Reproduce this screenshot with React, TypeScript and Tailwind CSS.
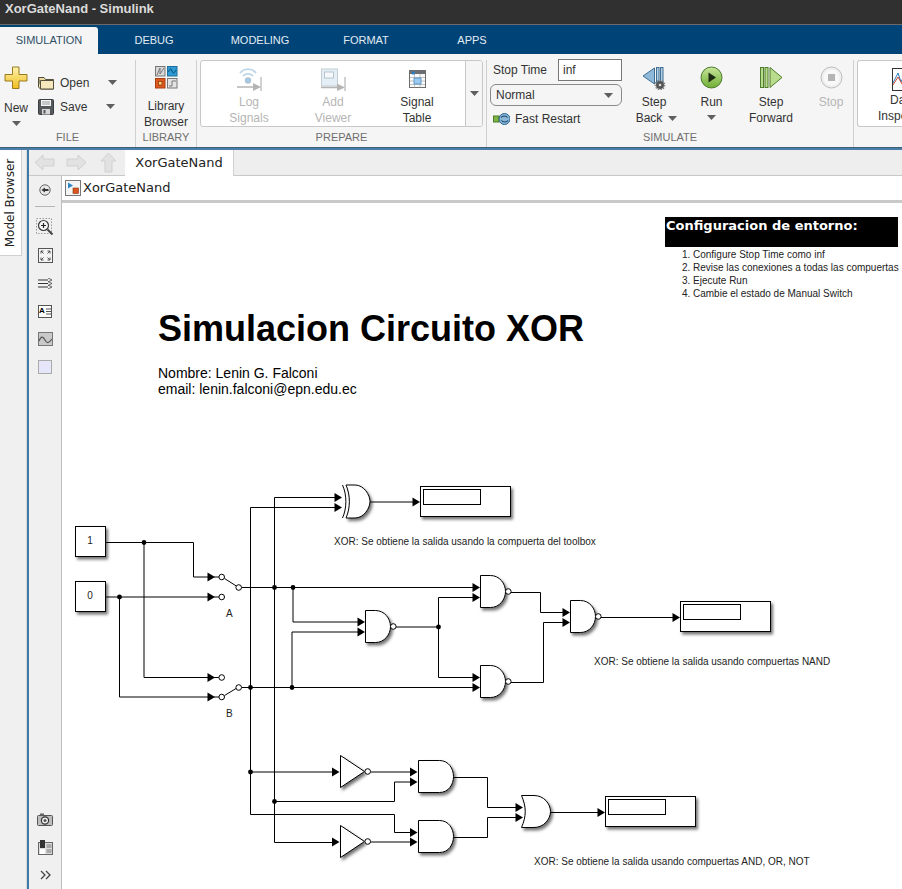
import type { ReactNode } from 'react';

const sans = "font-['Liberation_Sans',Arial,sans-serif]";
const deja = "font-['DejaVu_Sans',sans-serif]";

function Caret({ className = '' }: { className?: string }) {
  return (
    <svg width="9" height="5" viewBox="0 0 9 5" className={className}>
      <path d="M0 0H9L4.5 5Z" fill="#5f5f5f" />
    </svg>
  );
}

function PlusIcon() {
  return (
    <svg width="24" height="24" viewBox="0 0 24 24">
      <defs>
        <linearGradient id="plusFill" x1="0" y1="0" x2="0" y2="1">
          <stop offset="0" stopColor="#fff4b0" />
          <stop offset="1" stopColor="#f0bc1c" />
        </linearGradient>
      </defs>
      <path d="M8.5 1H15V8.5H23V15H15V22.5H8.5V15H1V8.5H8.5Z" fill="url(#plusFill)" stroke="#9a7a1e" strokeLinejoin="round" />
    </svg>
  );
}

function FolderIcon() {
  return (
    <svg width="17" height="15" viewBox="0 0 17 15">
      <path d="M0.5 2.5H6L7.5 4.5H15.5V14H2.5Z" fill="#e9d9a0" stroke="#55503c" />
      <path d="M0.5 2.5V12L2.5 14L2.5 5.5H15.5V14H2.5" fill="#f4e8bc" stroke="#55503c" />
    </svg>
  );
}

function SaveIcon() {
  return (
    <svg width="16" height="16" viewBox="0 0 16 16">
      <rect x="0.5" y="0.5" width="15" height="15" rx="1" fill="#55595c" stroke="#3c3f42" />
      <rect x="3" y="1" width="10" height="6" fill="#f4f4f4" />
      <path d="M4 3H12M4 5H12" stroke="#9a9a9a" />
      <rect x="4" y="10" width="8" height="5.5" fill="#d6d6d6" />
      <rect x="5.5" y="11" width="2" height="3.5" fill="#55595c" />
    </svg>
  );
}

function LibraryIcon() {
  return (
    <svg width="23" height="23" viewBox="0 0 23 23">
      <rect x="0.5" y="0.5" width="9.5" height="9.5" fill="#d8d8d8" stroke="#777" />
      <path d="M2 9L5 2V8L9 2" fill="none" stroke="#777" />
      <rect x="12.5" y="0.5" width="9.5" height="9.5" fill="#2e9bd6" stroke="#1d6f9c" />
      <path d="M13.5 6C15 2 16 2 17 5S19 8 21 4" fill="none" stroke="#0b4a70" />
      <rect x="0.5" y="12.5" width="9.5" height="9.5" fill="#dc5a1e" stroke="#a83d0e" />
      <rect x="3.5" y="15.5" width="3.5" height="3.5" fill="#f7d27c" stroke="#8a2f08" strokeWidth="0.7" />
      <rect x="12.5" y="12.5" width="9.5" height="9.5" fill="#e4e4e4" stroke="#777" />
      <path d="M14 20H17V15H21" fill="none" stroke="#777" />
    </svg>
  );
}

function LogSignalsIcon() {
  return (
    <svg width="25" height="23" viewBox="0 0 25 23">
      <path d="M3 5C7 0 15 0 19 5M6 8C9 5 13 5 16 8" fill="none" stroke="#b9d3e6" strokeWidth="1.6" />
      <circle cx="11" cy="12.5" r="3.2" fill="#a9c6dc" />
      <path d="M0 19H16" stroke="#b4b4b4" strokeWidth="1.4" />
      <path d="M16 15L24 19L16 23Z" fill="#b4b4b4" />
      <path d="M24 9V23" stroke="#b4b4b4" strokeWidth="1.2" />
    </svg>
  );
}

function AddViewerIcon() {
  return (
    <svg width="25" height="23" viewBox="0 0 25 23">
      <rect x="0.5" y="1" width="16" height="17" fill="#e4eef6" stroke="#c4cdd4" />
      <rect x="3.5" y="4" width="9" height="6" fill="#f6f9fb" stroke="#b9c4cc" />
      <path d="M0 19.5H16" stroke="#b4b4b4" strokeWidth="1.4" />
      <path d="M16 15.5L24 19.5L16 23Z" fill="#b4b4b4" />
      <path d="M24 9V23" stroke="#b4b4b4" strokeWidth="1.2" />
    </svg>
  );
}

function SignalTableIcon() {
  return (
    <svg width="17" height="18" viewBox="0 0 17 18">
      <rect x="0.5" y="0.5" width="16" height="17" fill="#fafafa" stroke="#6d6d6d" />
      <rect x="1" y="1" width="15" height="3" fill="#6b6f73" />
      <rect x="3" y="1.5" width="3" height="3" fill="#2d7fc4" />
      <path d="M1 7.5H16M1 11H16M1 14.5H16M5.5 4V17.5M11 4V17.5" stroke="#b4b4b4" strokeWidth="0.8" />
      <rect x="5" y="8" width="7" height="6" fill="#9cc9ee" stroke="#4a90cc" strokeWidth="0.8" />
    </svg>
  );
}

function FastRestartIcon() {
  return (
    <svg width="17" height="14" viewBox="0 0 17 14">
      <rect x="0.5" y="4" width="5.5" height="6" fill="#7cb342" stroke="#4e7d26" />
      <path d="M6 7H8" stroke="#444" />
      <circle cx="11.5" cy="7" r="5.5" fill="#8ab7d8" stroke="#27628c" />
      <path d="M8 5.5C9.5 3.5 13 3.5 14.5 5.5M15 8.5C13.5 10.5 10 10.5 8.5 8.5" fill="none" stroke="#123f5e" strokeWidth="1.2" />
    </svg>
  );
}

function StepBackIcon() {
  return (
    <svg width="24" height="24" viewBox="0 0 24 24">
      <path d="M12.5 2V18L1 10Z" fill="#8fb9d8" stroke="#3f6f94" strokeLinejoin="round" />
      <rect x="14.5" y="1.5" width="2.5" height="15" fill="#b3cfe3" stroke="#3f6f94" />
      <rect x="18.5" y="1.5" width="2.5" height="15" fill="#b3cfe3" stroke="#3f6f94" />
      <circle cx="18" cy="19" r="4" fill="#555" />
      <circle cx="18" cy="19" r="4.8" fill="none" stroke="#777" strokeWidth="1.2" strokeDasharray="1.5 1.2" />
      <circle cx="18" cy="19" r="1.3" fill="#ddd" />
    </svg>
  );
}

function RunIcon() {
  return (
    <svg width="23" height="23" viewBox="0 0 23 23">
      <defs>
        <linearGradient id="runFill" x1="0" y1="0" x2="0" y2="1">
          <stop offset="0" stopColor="#c8e59a" />
          <stop offset="1" stopColor="#6fae35" />
        </linearGradient>
      </defs>
      <circle cx="11.5" cy="11.5" r="10.5" fill="url(#runFill)" stroke="#4a7a2a" />
      <path d="M8.5 6.5L16 11.5L8.5 16.5Z" fill="#1d2a12" />
    </svg>
  );
}

function StepForwardIcon() {
  return (
    <svg width="23" height="23" viewBox="0 0 23 23">
      <rect x="0.5" y="1.5" width="3" height="20" fill="#b9dc8c" stroke="#4f7d2b" />
      <rect x="5" y="1.5" width="3" height="20" fill="#b9dc8c" stroke="#4f7d2b" />
      <path d="M10 1.5V21.5L22 11.5Z" fill="#b9dc8c" stroke="#4f7d2b" strokeLinejoin="round" />
    </svg>
  );
}

function StopIcon() {
  return (
    <svg width="23" height="23" viewBox="0 0 23 23">
      <circle cx="11.5" cy="11.5" r="10.5" fill="#efefef" stroke="#bdbdbd" />
      <circle cx="11.5" cy="11.5" r="8" fill="#f8f8f8" />
      <rect x="8" y="8" width="7" height="7" fill="#b4b4b4" />
    </svg>
  );
}

function InspectorIcon() {
  return (
    <svg width="17" height="23" viewBox="0 0 17 23">
      <rect x="0.5" y="0.5" width="16" height="22" fill="#fff" stroke="#333" />
      <path d="M1 15L6 5L9 14L14 3" fill="none" stroke="#2c7fbf" />
      <path d="M1 17L6 9L10 16L16 10" fill="none" stroke="#c9452b" />
    </svg>
  );
}

function NavArrow({ dir }: { dir: 'left' | 'right' | 'up' }) {
  const rotate = dir === 'left' ? '' : dir === 'right' ? 'rotate-180' : 'rotate-90';
  return (
    <svg width="21" height="17" viewBox="0 0 21 17" className={rotate}>
      <path d="M1 8.5L9 1V5H20V12H9V16Z" fill="#e2e2e2" stroke="#d0d0d0" strokeLinejoin="round" />
    </svg>
  );
}

function ModelIcon() {
  return (
    <svg width="16" height="16" viewBox="0 0 16 16">
      <rect x="0.5" y="0.5" width="15" height="15" fill="#f4f4f4" stroke="#777" />
      <path d="M3 2.5L8 5.5L3 8.5Z" fill="#2b86c5" />
      <rect x="8" y="8" width="5.5" height="5.5" fill="#d9541e" stroke="#8c3310" strokeWidth="0.6" />
    </svg>
  );
}

function ToolIcon({ children }: { children: ReactNode }) {
  return <div className="h-[28px] flex items-center justify-center">{children}</div>;
}

function SideToolbar() {
  return (
    <div className="w-[33px] shrink-0 bg-[#f0f0f0] border-r border-[#bdbdbd] h-full flex flex-col items-stretch">
      <div className="h-[28px] mt-0 flex items-center justify-center">
        <svg width="12" height="12" viewBox="0 0 12 12">
          <circle cx="6" cy="6" r="5.2" fill="#e8e8e8" stroke="#666" />
          <path d="M2.5 6L6 3.5V5H9.5V7H6V8.5Z" fill="#333" />
        </svg>
      </div>
      <div className="mx-[6px] mt-[2px] mb-[6px] h-px bg-[#b5b5b5]" />
      <ToolIcon>
        <svg width="18" height="18" viewBox="0 0 18 18">
          <rect x="0.5" y="0.5" width="15" height="15" fill="none" stroke="#999" strokeDasharray="1.5 1.5" />
          <circle cx="7.5" cy="7.5" r="5" fill="#f7f7f7" stroke="#3a3a3a" strokeWidth="1.2" />
          <path d="M5 7.5H10M7.5 5V10" stroke="#222" strokeWidth="1.2" />
          <path d="M11.5 11.5L16.5 16.5" stroke="#444" strokeWidth="2" />
        </svg>
      </ToolIcon>
      <ToolIcon>
        <svg width="15" height="15" viewBox="0 0 15 15">
          <rect x="0.5" y="0.5" width="14" height="14" fill="#f4f4f4" stroke="#555" />
          <path d="M3 5.5V3H5.5M9.5 3H12V5.5M12 9.5V12H9.5M5.5 12H3V9.5M3 3L5.5 5.5M12 3L9.5 5.5M12 12L9.5 9.5M3 12L5.5 9.5" fill="none" stroke="#444" strokeWidth="0.9" />
        </svg>
      </ToolIcon>
      <ToolIcon>
        <svg width="15" height="11" viewBox="0 0 15 11">
          <path d="M0 2H11M0 5.5H11M0 9H11" stroke="#333" />
          <path d="M10 0L14 2L10 4M10 3.5L14 5.5L10 7.5M10 7L14 9L10 11" fill="#eee" stroke="#444" strokeWidth="0.8" />
        </svg>
      </ToolIcon>
      <ToolIcon>
        <div className={`w-[14px] h-[13px] border border-[#555] bg-white flex items-center justify-center gap-px text-[8px] font-bold leading-none text-black ${sans}`}>
          <span>A</span>
          <svg width="5" height="7" viewBox="0 0 5 7">
            <path d="M0 1H5M0 3.5H5M0 6H5" stroke="#555" />
          </svg>
        </div>
      </ToolIcon>
      <ToolIcon>
        <svg width="15" height="14" viewBox="0 0 15 14">
          <rect x="0.5" y="0.5" width="14" height="13" fill="#c9c9c9" stroke="#777" />
          <path d="M1 9C3 4 5 4 7 8S11 11 14 7" fill="none" stroke="#555" strokeWidth="1.2" />
        </svg>
      </ToolIcon>
      <ToolIcon>
        <div className="w-[14px] h-[14px] border border-[#aaa] bg-[#e6e6fa]" />
      </ToolIcon>
      <div className="flex-1" />
      <ToolIcon>
        <svg width="16" height="13" viewBox="0 0 16 13">
          <rect x="0.5" y="2.5" width="15" height="10" rx="1" fill="#bdbdbd" stroke="#555" />
          <rect x="3" y="0.5" width="4" height="2" fill="#666" />
          <circle cx="8" cy="7.5" r="3.6" fill="#eee" stroke="#333" strokeWidth="1.2" />
          <circle cx="8" cy="7.5" r="1.5" fill="#555" />
        </svg>
      </ToolIcon>
      <ToolIcon>
        <svg width="15" height="15" viewBox="0 0 15 15">
          <rect x="0.5" y="2.5" width="14" height="12" fill="#ddd" stroke="#666" />
          <rect x="2" y="0" width="5" height="8" fill="#333" />
          <rect x="2" y="9" width="5" height="5" fill="#fff" />
          <rect x="8.5" y="4" width="5" height="4" fill="#aaa" />
          <rect x="8.5" y="9" width="5" height="4" fill="#aaa" />
        </svg>
      </ToolIcon>
      <ToolIcon>
        <svg width="11" height="10" viewBox="0 0 11 10">
          <path d="M1 1L5 5L1 9M6 1L10 5L6 9" fill="none" stroke="#444" strokeWidth="1.3" />
        </svg>
      </ToolIcon>
    </div>
  );
}

function LargeButton({
  icon,
  lines,
  width,
  muted = false,
  caret,
}: {
  icon: ReactNode;
  lines: string[];
  width: string;
  muted?: boolean;
  caret?: boolean;
}) {
  return (
    <div className={`${width} shrink-0 flex flex-col items-center leading-4 text-xs ${muted ? 'text-[#b5b5b5]' : 'text-[#333]'}`}>
      <div className="h-[28px] flex items-start justify-center">{icon}</div>
      {lines.map((l) => (
        <div key={l} className="whitespace-nowrap">{l}</div>
      ))}
      {caret && <Caret className="mt-[5px]" />}
    </div>
  );
}

function Section({ label, width, children, sep = true }: { label: string; width: string; children: ReactNode; sep?: boolean }) {
  return (
    <div className={`${width} shrink-0 h-full flex flex-col ${sep ? 'border-r border-[#cfcfcf]' : ''}`}>
      <div className="flex-1 min-h-0 flex">{children}</div>
      <div className="h-[17px] text-center text-[11px] leading-[15px] text-[#6f6f6f]">{label}</div>
    </div>
  );
}

function Ribbon() {
  return (
    <div className={`h-[93px] bg-[#f5f5f5] flex pt-[6px] ${sans}`}>
      <Section label="FILE" width="w-[136px]">
        <div className="w-[32px] shrink-0 flex flex-col items-center text-xs text-[#333] pt-[6px] leading-4">
          <div className="h-[27px]"><PlusIcon /></div>
          <div className="mt-[7px]">New</div>
          <Caret className="mt-[5px]" />
        </div>
        <div className="flex flex-col pl-[6px] pt-[14px] gap-[7px] text-xs text-[#333]">
          <div className="flex items-center h-[17px]">
            <FolderIcon />
            <span className="ml-[5px] w-[48px]">Open</span>
            <Caret />
          </div>
          <div className="flex items-center h-[17px]">
            <SaveIcon />
            <span className="ml-[6px] w-[46px]">Save</span>
            <Caret />
          </div>
        </div>
      </Section>
      <Section label="LIBRARY" width="w-[61px]">
        <div className="w-full flex flex-col items-center text-xs text-[#333] pt-[6px] leading-4">
          <div className="h-[29px]"><LibraryIcon /></div>
          <div className="mt-[5px]">Library</div>
          <div>Browser</div>
        </div>
      </Section>
      <Section label="PREPARE" width="w-[290px] pl-[3px] pr-[3px]">
        <div className="w-full h-[67px] bg-white border border-[#c8c8c8] rounded-[3px] flex overflow-hidden">
          <div className="flex-1 flex pt-[7px]">
            <LargeButton icon={<LogSignalsIcon />} lines={['Log', 'Signals']} width="w-[96px]" muted />
            <LargeButton icon={<AddViewerIcon />} lines={['Add', 'Viewer']} width="w-[72px]" muted />
            <LargeButton icon={<div className="pt-[2px]"><SignalTableIcon /></div>} lines={['Signal', 'Table']} width="w-[96px]" />
          </div>
          <div className="w-[19px] bg-[#f5f5f5] border-l border-[#c8c8c8] flex items-center justify-center">
            <Caret />
          </div>
        </div>
      </Section>
      <Section label="SIMULATE" width="w-[367px]">
        <div className="relative w-full flex">
          <div className="w-[139px] shrink-0 pl-[3px] text-xs text-[#333]">
            <div className="flex items-center h-[22px] -mt-px">
              <span className="ml-[3px] w-[65px]">Stop Time</span>
              <div className="w-[64px] h-[22px] bg-white border border-[#777] pl-[4px] leading-5">inf</div>
            </div>
            <div className="mt-[3px] w-[132px] h-[22px] bg-[#f5f5f5] border border-[#8a8a8a] rounded-md flex items-center justify-between pl-[5px] pr-[8px]">
              <span>Normal</span>
              <Caret />
            </div>
            <div className="mt-[5px] ml-[3px] flex items-center h-[15px]">
              <FastRestartIcon />
              <span className="ml-[5px]">Fast Restart</span>
            </div>
          </div>
          <div className="flex pt-[6px]">
            <div className="w-[56px] flex flex-col items-center text-xs leading-4 text-[#333] ml-[0px]">
              <div className="h-[28px] w-full flex justify-center"><StepBackIcon /></div>
              <div>Step</div>
              <div className="flex items-center gap-[6px] ml-[5px]">Back<Caret /></div>
            </div>
            <LargeButton icon={<RunIcon />} lines={['Run']} width="w-[57px] ml-[1px]" caret />
            <LargeButton icon={<StepForwardIcon />} lines={['Step', 'Forward']} width="w-[64px] ml-[-1px]" />
            <LargeButton icon={<StopIcon />} lines={['Stop']} width="w-[50px] ml-[3px]" muted />
          </div>
        </div>
      </Section>
      <div className="flex-1 pl-[3px] h-[67px]">
        <div className="w-[80px] h-[67px] bg-white border border-r-0 border-[#c8c8c8] rounded-l-[3px] pt-[7px] pl-[34px] text-xs leading-4 text-[#333] whitespace-nowrap">
          <InspectorIcon />
          <div className="mt-[1px] -ml-[2px]">Da</div>
          <div className="-ml-[14px]">Inspector</div>
        </div>
      </div>
    </div>
  );
}

function Arrow({ x, y }: { x: number; y: number }) {
  return <polygon points={`${x - 7.5},${y - 4.5} ${x},${y} ${x - 7.5},${y + 4.5}`} fill="#000" />;
}

function Dot({ x, y }: { x: number; y: number }) {
  return <circle cx={x} cy={y} r="2.4" fill="#000" />;
}

function Bubble({ x, y }: { x: number; y: number }) {
  return <circle cx={x} cy={y} r="2.8" fill="#fff" stroke="#000" strokeWidth="1" />;
}

function Nand({ x, y }: { x: number; y: number }) {
  return (
    <g transform={`translate(${x} ${y})`}>
      <path d="M0 0H10C19 0 25 8 25 16C25 24 19 32 10 32H0Z" fill="#fff" stroke="#000" filter="url(#blockShadow)" />
      <circle cx="27.8" cy="16" r="2.8" fill="#fff" stroke="#000" />
    </g>
  );
}

function And({ x, y }: { x: number; y: number }) {
  return (
    <path
      transform={`translate(${x} ${y})`}
      d="M0 0H21C30 0 35 8 35 16C35 24 30 32 21 32H0Z"
      fill="#fff"
      stroke="#000"
      filter="url(#blockShadow)"
    />
  );
}

function Inverter({ y }: { y: number }) {
  return (
    <g transform={`translate(340.5 ${y})`}>
      <path d="M0 0L24 16L0 32Z" fill="#fff" stroke="#000" filter="url(#blockShadow)" />
      <circle cx="27.2" cy="16" r="2.8" fill="#fff" stroke="#000" />
    </g>
  );
}

function Display({ x, y }: { x: number; y: number }) {
  return (
    <g transform={`translate(${x} ${y})`}>
      <rect x="0.5" y="0.5" width="90" height="30" fill="#fff" stroke="#000" filter="url(#blockShadow)" />
      <rect x="3.5" y="3.5" width="57" height="15" fill="#fff" stroke="#000" />
    </g>
  );
}

function Diagram() {
  const wires = [
    // constants into the switches
    'M105 544.5H193.5V579H208',
    'M144 544.5V679.5H208',
    'M105 599H208',
    'M119.5 599V699H208',
    'M214 579H219M214 599H219M214 679.5H219M214 699H219',
    // switch A and B levers and outputs
    'M224.5 580.5L236 587.8',
    'M224.5 697.5L236 690.5',
    'M241.5 589.5H473',
    'M241.5 689.5H473',
    // buses to XOR and lower gates
    'M274.5 589.5V499.5H336',
    'M250.5 689.5V509.5H336',
    'M370 504H413',
    'M274.5 589.5V844.5H332',
    'M250.5 689.5V816.5H394.5V834.5H411',
    'M250.5 774H332',
    'M274.5 803.5H394.5V784H411',
    // NAND network
    'M293 589.5V624H358',
    'M292 689.5V634H358',
    'M395.5 629H438.5',
    'M438.5 599.5V679.5H473',
    'M438.5 599.5H473',
    'M510.5 594.5H540.5V614.5H563',
    'M510.5 684.5H543.5V624.5H563',
    'M600.5 619.5H673',
    // inverters and AND/OR
    'M370.5 774H411',
    'M370.5 844H411',
    'M453.5 779.5H487.5V809.5H516',
    'M453.5 839.5H487.5V819.5H516',
    'M550 814.5H598',
  ];
  const arrows: [number, number][] = [
    [215, 579], [215, 599], [215, 679.5], [215, 699],
    [342, 499.5], [342, 509.5], [420, 504],
    [365, 624], [365, 634],
    [480, 589.5], [480, 599.5], [480, 679.5], [480, 689.5],
    [570, 614.5], [570, 624.5], [680, 619.5],
    [339.5, 774], [339.5, 844],
    [417.5, 774], [417.5, 784], [417.5, 834.5], [417.5, 844],
    [523, 809.5], [523, 819.5], [605, 814.5],
  ];
  const dots: [number, number][] = [
    [144, 544.5], [119.5, 599], [274.5, 589.5], [293, 589.5], [250.5, 689.5], [292, 689.5],
    [438.5, 629], [250.5, 774], [274.5, 803.5],
  ];
  const bubbles: [number, number][] = [
    [221.7, 579], [221.7, 599], [238.7, 589.5], [221.7, 679.5], [221.7, 699], [238.7, 689.5],
  ];
  return (
    <svg width="840" height="684" viewBox="62 205 840 684" className="absolute inset-0">
      <defs>
        <filter id="blockShadow" x="-20%" y="-20%" width="150%" height="150%">
          <feDropShadow dx="2" dy="2.5" stdDeviation="1.6" floodColor="#000" floodOpacity="0.55" />
        </filter>
      </defs>
      <rect x="75.5" y="528.5" width="30" height="30" fill="#fff" stroke="#000" filter="url(#blockShadow)" />
      <rect x="75.5" y="583.5" width="30" height="30" fill="#fff" stroke="#000" filter="url(#blockShadow)" />
      {wires.map((d) => (
        <path key={d} d={d} fill="none" stroke="#000" strokeWidth="1" />
      ))}
      <path d="M346 487H355C364 487 370 497 370 503.5C370 510 364 520 355 520H346C350.5 510 350.5 497 346 487Z" fill="#fff" stroke="#000" filter="url(#blockShadow)" />
      <path d="M342.5 487C347 497 347 510 342.5 520" fill="none" stroke="#000" />
      <Nand x={365.5} y={612.5} />
      <Nand x={480.5} y={577.5} />
      <Nand x={480.5} y={667.5} />
      <Nand x={570.5} y={602.5} />
      <Inverter y={757.5} />
      <Inverter y={827.5} />
      <And x={418.5} y={762.5} />
      <And x={418.5} y={822.5} />
      <path d="M521.5 797.5H534C544 797.5 550.5 806 550.5 813.5C550.5 821 544 829.5 534 829.5H521.5C526.5 818 526.5 809 521.5 797.5Z" fill="#fff" stroke="#000" filter="url(#blockShadow)" />
      <Display x={420} y={488} />
      <Display x={680} y={603} />
      <Display x={605} y={798} />
      {bubbles.map(([x, y]) => (
        <Bubble key={`${x}-${y}`} x={x} y={y} />
      ))}
      {arrows.map(([x, y]) => (
        <Arrow key={`${x}-${y}`} x={x} y={y} />
      ))}
      {dots.map(([x, y]) => (
        <Dot key={`${x}-${y}`} x={x} y={y} />
      ))}
    </svg>
  );
}

function Canvas() {
  return (
    <div className={`relative flex-1 min-h-0 bg-white overflow-hidden text-black ${sans}`}>
      <Diagram />
      {/* annotations sit on the model canvas, offsets are canvas coordinates */}
      <div className="absolute left-[603px] top-[14px] w-[233px] h-[30px] bg-black text-white">
        <div className={`pl-px text-[13px] leading-[17px] font-bold whitespace-nowrap ${deja}`}>Configuracion de entorno:</div>
      </div>
      <ol className="absolute left-[620px] top-[45px] text-[10px] leading-[13px] text-[#222] whitespace-nowrap">
        {['Configure Stop Time como inf', 'Revise las conexiones a todas las compuertas', 'Ejecute Run', 'Cambie el estado de Manual Switch'].map((t, i) => (
          <li key={t} className="flex">
            <span className="w-[11px]">{i + 1}.</span>
            <span>{t}</span>
          </li>
        ))}
      </ol>
      <div className="absolute left-[96px] top-[104px] text-[36px] leading-[44px] font-bold whitespace-nowrap">Simulacion Circuito XOR</div>
      <div className="absolute left-[96px] top-[162px] text-sm leading-4 whitespace-nowrap">
        <div>Nombre: Lenin G. Falconi</div>
        <div>email: lenin.falconi@epn.edu.ec</div>
      </div>
      <div className="absolute left-[272px] top-[333px] text-[10px] leading-3 text-[#222] whitespace-nowrap">XOR: Se obtiene la salida usando la compuerta del toolbox</div>
      <div className="absolute left-[532px] top-[453px] text-[10px] leading-3 text-[#222] whitespace-nowrap">XOR: Se obtiene la salida usando compuertas NAND</div>
      <div className="absolute left-[472px] top-[653px] text-[10px] leading-3 text-[#222] whitespace-nowrap">XOR: Se obtiene la salida usando compuertas AND, OR, NOT</div>
      <div className="absolute left-[164px] top-[405px] text-[10px] leading-3 text-[#222]">A</div>
      <div className="absolute left-[164px] top-[505px] text-[10px] leading-3 text-[#222]">B</div>
      <div className="absolute left-[13px] top-[323px] w-[30px] h-[30px] text-[10px] leading-[30px] text-center text-[#222]">1</div>
      <div className="absolute left-[13px] top-[378px] w-[30px] h-[30px] text-[10px] leading-[30px] text-center text-[#222]">0</div>
    </div>
  );
}

export default function App() {
  return (
    <div className={`w-[902px] h-[889px] overflow-hidden flex flex-col bg-[#f0f0f0] ${sans}`}>
      <div className="h-[25px] shrink-0 bg-[#303030] border-b border-[#6a6a6a] pl-[5px] text-[13px] leading-[18px] font-bold text-[#dcdcdc]">
        XorGateNand - Simulink
      </div>
      <div className="h-[29px] shrink-0 bg-[#004477] flex items-end text-[11px] text-[#e3ebf2]">
        <div className="w-[98px] h-[27px] bg-[#f5f5f5] text-[#2f4f66] rounded-tr-[3px] flex items-center justify-center">SIMULATION</div>
        <div className="w-[112px] h-[27px] flex items-center justify-center">DEBUG</div>
        <div className="w-[100px] h-[27px] flex items-center justify-center">MODELING</div>
        <div className="w-[112px] h-[27px] flex items-center justify-center">FORMAT</div>
        <div className="w-[100px] h-[27px] flex items-center justify-center">APPS</div>
      </div>
      <Ribbon />
      <div className="h-[3px] shrink-0 bg-[#4a7ea6] border-t border-[#3d5f78]" />
      <div className="flex-1 min-h-0 flex">
        <div className="w-[27px] shrink-0 bg-[#f0f0f0] border-r border-[#d8d8d8]">
          <div className={`w-[22px] h-[106px] bg-white border-r border-b border-[#d0d0d0] flex items-center justify-center ${deja}`}>
            <span className="-rotate-90 whitespace-nowrap text-[12px] text-[#222]">Model Browser</span>
          </div>
        </div>
        <div className="w-[2px] shrink-0 bg-[#3f79a8]" />
        <div className="flex-1 min-w-0 flex flex-col">
          <div className="h-[26px] shrink-0 bg-[#eeeeee] border-b border-[#c8c8c8] flex">
            <div className="w-[96px] shrink-0 flex items-center pl-[5px] gap-[11px]">
              <NavArrow dir="left" />
              <NavArrow dir="right" />
              <NavArrow dir="up" />
            </div>
            <div className={`w-[109px] h-[26px] bg-white border-r border-[#d0d0d0] text-[13px] leading-[26px] text-center text-[#222] ${deja}`}>XorGateNand</div>
          </div>
          <div className="flex-1 min-h-0 flex">
            <SideToolbar />
            <div className="flex-1 min-w-0 flex flex-col">
              <div className={`h-[27px] shrink-0 bg-white border-b-[3px] border-[#c9c9c9] flex items-center pl-[3px] gap-[2px] text-[13px] text-[#222] ${deja}`}>
                <ModelIcon />
                <span>XorGateNand</span>
              </div>
              <Canvas />
            </div>
          </div>
        </div>
      </div>
    </div>
  );
}
